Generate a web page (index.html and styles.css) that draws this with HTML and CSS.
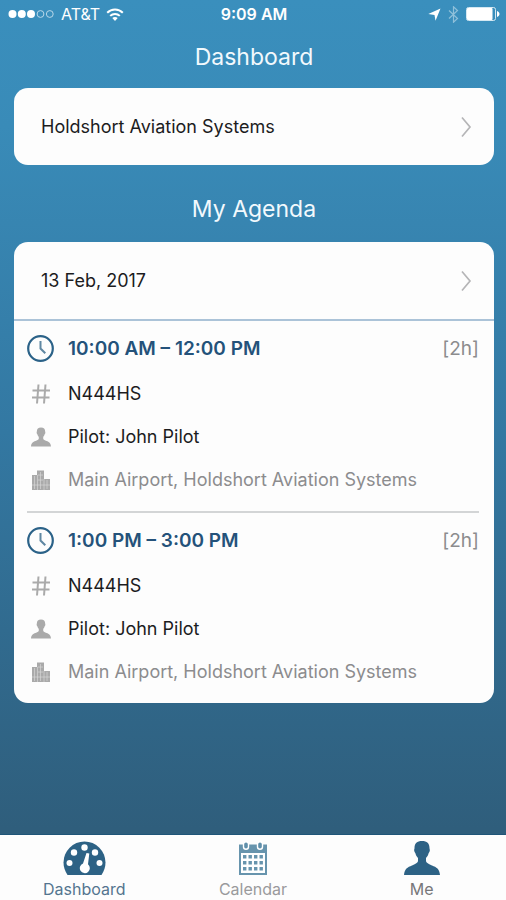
FILE: index.html
```html
<!DOCTYPE html>
<html lang="en">
<head>
<meta charset="utf-8">
<meta name="viewport" content="width=device-width, initial-scale=1">
<title>Dashboard</title>
<link rel="stylesheet" href="styles.css">
</head>
<body>
<svg class="sprite" aria-hidden="true">
  <symbol id="clock" viewBox="0 0 27 27"><circle cx="13.500" cy="13.500" r="12.300" fill="none" stroke="#2b6288" stroke-width="2.200"/><path d="M13.500 6v7.500l4.800 4.800" fill="none" stroke="#5f87a2" stroke-width="2"/></symbol>
  <symbol id="hash" viewBox="0 0 20 20"><path d="M7.500.5 6 19.500M14.500.5 13 19.500M1.500 6.500h17.500M1 13.500h17.500" fill="none" stroke="currentColor" stroke-width="2"/></symbol>
  <symbol id="person" viewBox="0 0 36 34"><path d="M18 0c5 0 7.500 2.500 7.500 7 0 1 .5 1.300.3 2.800-.2 1.400-.9 1.700-1.200 2.400-.5 2.300-1.500 3.400-2.600 4.800v3.300c.5 2 3 2.900 6 4.100 4.500 1.700 7.500 3.400 8 9.600H0c.5-6.200 3.500-7.900 8-9.600 3-1.200 5.500-2.100 6-4.100V17c-1.100-1.400-2.100-2.500-2.600-4.800-.3-.7-1-1-1.200-2.400-.2-1.500.3-1.800.3-2.800C10.500 2.500 13 0 18 0z" fill="currentColor"/></symbol>
  <symbol id="buildings" viewBox="0 0 20 20"><path d="M1 5h5V.5h7V9h6v11H1z" fill="currentColor"/><path d="M3.500 6v13M6.500 5v15M9.500 2v17M13 9v11M16 10v9M7 5h5M7 10h5M1 15h18" stroke="#fdfdfd" stroke-width=".6" opacity=".6"/></symbol>
  <symbol id="chevron" viewBox="0 0 12 22"><path d="m2 1.500 8 9.500-8 9.500" fill="none" stroke="#b5b5b7" stroke-width="1.700"/></symbol>
</svg>

<header class="status">
  <div class="status-left">
    <svg width="47" height="10" viewBox="0 0 47 10" aria-hidden="true"><g fill="#fff"><circle cx="4.500" cy="5" r="4"/><circle cx="13.800" cy="5" r="4"/><circle cx="23" cy="5" r="4"/></g><g fill="none" stroke="#b9d8e9"><circle cx="32.500" cy="5" r="3.400"/><circle cx="41.800" cy="5" r="3.400"/></g></svg>
    <span>AT&amp;T</span>
    <svg width="18" height="13" viewBox="0 0 18 13" aria-hidden="true"><g fill="none" stroke="#fff" stroke-width="2"><path d="M1.200 4.800C5.500.4 12.500.4 16.800 4.800"/><path d="M4.200 7.900c2.700-2.700 6.900-2.700 9.600 0"/></g><path d="M9 13 6.300 10.100c1.500-1.500 3.900-1.500 5.400 0z" fill="#fff"/></svg>
  </div>
  <time class="status-time">9:09 AM</time>
  <div class="status-right">
    <svg width="13" height="13" viewBox="0 0 13 13" aria-hidden="true"><path d="M12.500.5 7.500 12.800 6.500 7 .3 6z" fill="#fff"/></svg>
    <svg width="11" height="17" viewBox="0 0 11 17" aria-hidden="true"><path d="m1 4.500 8.500 8-4 3.700V.8l4 3.700-8.500 8" fill="none" stroke="#8fc0da" stroke-width="1.200"/></svg>
    <svg width="34" height="14" viewBox="0 0 34 14" aria-hidden="true"><rect x=".5" y=".5" width="29" height="13" rx="2" fill="none" stroke="#d5e8f2"/><rect x="1" y="1" width="25.500" height="12" rx="1" fill="#fff"/><path d="M31 4c1.500.5 2.500 1.600 2.500 3S32.500 9.500 31 10z" fill="#fff"/></svg>
  </div>
</header>

<main class="content">
  <h1 class="heading">Dashboard</h1>
  <section class="card">
    <a class="card-link" href="#company">Holdshort Aviation Systems<svg class="chevron" aria-hidden="true"><use href="#chevron"/></svg></a>
  </section>

  <h2 class="heading">My Agenda</h2>
  <section class="card">
    <a class="card-link card-link-date" href="#day">13 Feb, 2017<svg class="chevron" aria-hidden="true"><use href="#chevron"/></svg></a>
    <article class="entry">
      <h3 class="row row-time"><svg class="icon-clock" aria-hidden="true"><use href="#clock"/></svg><span>10:00 AM – 12:00 PM</span><span class="duration">[2h]</span></h3>
      <p class="row"><svg class="icon" aria-hidden="true"><use href="#hash"/></svg>N444HS</p>
      <p class="row"><svg class="icon" aria-hidden="true"><use href="#person"/></svg>Pilot: John Pilot</p>
      <p class="row row-place"><svg class="icon" aria-hidden="true"><use href="#buildings"/></svg>Main Airport, Holdshort Aviation Systems</p>
    </article>
    <article class="entry">
      <h3 class="row row-time"><svg class="icon-clock" aria-hidden="true"><use href="#clock"/></svg><span>1:00 PM – 3:00 PM</span><span class="duration">[2h]</span></h3>
      <p class="row"><svg class="icon" aria-hidden="true"><use href="#hash"/></svg>N444HS</p>
      <p class="row"><svg class="icon" aria-hidden="true"><use href="#person"/></svg>Pilot: John Pilot</p>
      <p class="row row-place"><svg class="icon" aria-hidden="true"><use href="#buildings"/></svg>Main Airport, Holdshort Aviation Systems</p>
    </article>
  </section>
</main>

<nav class="tabs">
  <a class="tab tab-active" href="#dashboard" aria-current="page">
    <svg width="43" height="34" viewBox="0 0 43 34" aria-hidden="true"><path d="M4.500 34C2 30 .5 26 .5 21.500a21 21 0 0 1 42 0c0 4.500-1.500 8.500-4 12.500z" fill="#2d6285"/><g fill="#fff"><circle cx="6.500" cy="22" r="3"/><circle cx="11" cy="11.500" r="3.200"/><circle cx="21.500" cy="6.500" r="3.200"/><circle cx="32" cy="11.500" r="3.200"/><circle cx="36.500" cy="22" r="3"/><path d="m23.500 12 2.800.6-1.300 10.700a5 5 0 1 1-5-.8z"/></g></svg>
    Dashboard
  </a>
  <a class="tab" href="#calendar">
    <svg width="30" height="34" viewBox="0 0 30 34" aria-hidden="true"><path d="M1 3.500h28V34H1z" fill="#6794ad"/><path d="M3 12h24v20H3z" fill="#fff"/><g fill="#5f8faa" stroke="#fff" stroke-width="1.400"><rect x="5.500" y=".7" width="5" height="7.500" rx="2.500"/><rect x="19.500" y=".7" width="5" height="7.500" rx="2.500"/></g><path d="M5 15.800h20M5 21.800h20M5 27.800h20" stroke="#6794ad" stroke-width="3.400" stroke-dasharray="3.400 2.100"/></svg>
    Calendar
  </a>
  <a class="tab tab-me" href="#me">
    <svg class="icon-me" aria-hidden="true"><use href="#person"/></svg>
    Me
  </a>
</nav>
</body>
</html>
```
FILE: styles.css
```css
* {
  box-sizing: border-box;
}

body {
  margin: 0;
  min-height: 100vh;
  display: flex;
  flex-direction: column;
  background: linear-gradient(#3a8fbd 0, #398bb8 14%, #3378a2 48%, #2f5e7c 92%);
  color: #1c1c1e;
  font: 18px/24px Inter, "Liberation Sans", sans-serif;
}

a {
  color: inherit;
  text-decoration: none;
}

svg {
  display: block;
  flex: none;
}

.sprite {
  position: absolute;
  width: 0;
  height: 0;
}

.status {
  display: grid;
  grid-template-columns: 1fr auto 1fr;
  align-items: center;
  height: 28px;
  padding: 0 6px 0 8px;
  color: #fff;
  font-size: 16px;
}

.status-left,
.status-right {
  display: flex;
  align-items: center;
  gap: 6px;
}

.status-right {
  justify-content: flex-end;
  gap: 7px;
}

.status-time {
  font-weight: 600;
}

.content {
  flex: 1;
  padding: 0 12px 0 14px;
}

.heading {
  margin: 0;
  padding: 15px 0 17px;
  color: #f2f9fd;
  font-size: 23px;
  font-weight: 400;
  line-height: 28px;
  text-align: center;
}

.card + .heading {
  padding: 30px 0 19px;
}

.card {
  border-radius: 14px;
  background: #fdfdfd;
}

.card-link {
  display: flex;
  align-items: center;
  justify-content: space-between;
  height: 77px;
  padding: 0 22px 0 27px;
}

.card-link-date {
  height: 79px;
  border-bottom: 2px solid #abc3d8;
}

.chevron {
  width: 12px;
  height: 22px;
}

.entry {
  margin: 0 15px 0 13px;
  padding: 4px 0 10px;
}

.entry + .entry {
  border-top: 2px solid #d3d5d6;
}

.row {
  display: grid;
  grid-template-columns: 27px 1fr auto;
  gap: 14px;
  align-items: center;
  height: 43px;
  margin: 0;
}

.row-time {
  height: 47px;
  color: #24527a;
  font-size: 19px;
  font-weight: 600;
}

.row-place,
.duration {
  color: #8c8c8e;
  font-weight: 400;
}

.icon-clock {
  width: 27px;
  height: 27px;
}

.icon {
  width: 20px;
  height: 20px;
  justify-self: center;
  color: #aaa;
}

.tabs {
  display: grid;
  grid-template-columns: repeat(3, 1fr);
  border-top: 1px solid #1f5578;
  background: #fdfdfd;
  color: #9a9a9c;
  font-size: 16px;
  line-height: 20px;
}

.tab {
  display: flex;
  flex-direction: column;
  align-items: center;
  gap: 4px;
  padding: 6px 0 1px;
}

.tab-active {
  color: #54758f;
}

.tab-me {
  color: #77777a;
}

.icon-me {
  width: 36px;
  height: 34px;
  color: #2d6285;
}
```
